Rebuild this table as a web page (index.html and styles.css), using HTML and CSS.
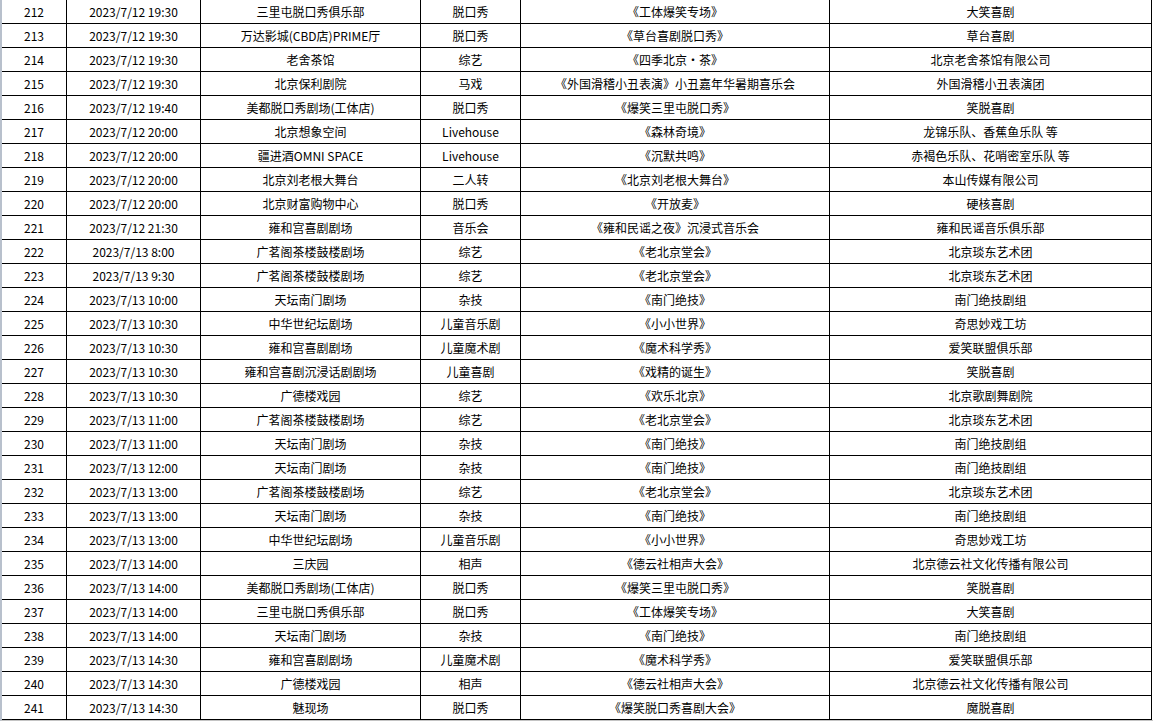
FILE: index.html
```html
<!DOCTYPE html>
<html lang="zh-CN">
<head>
<meta charset="utf-8">
<title>演出安排</title>
<link rel="stylesheet" href="styles.css">
</head>
<body>
<div class="sheet" role="table">
<div class="row" role="row"><div class="c">212</div><div class="c">2023/7/12 19:30</div><div class="c">三里屯脱口秀俱乐部</div><div class="c">脱口秀</div><div class="c">《工体爆笑专场》</div><div class="c">大笑喜剧</div></div>
<div class="row" role="row"><div class="c">213</div><div class="c">2023/7/12 19:30</div><div class="c">万达影城(CBD店)PRIME厅</div><div class="c">脱口秀</div><div class="c">《草台喜剧脱口秀》</div><div class="c">草台喜剧</div></div>
<div class="row" role="row"><div class="c">214</div><div class="c">2023/7/12 19:30</div><div class="c">老舍茶馆</div><div class="c">综艺</div><div class="c">《四季北京・茶》</div><div class="c">北京老舍茶馆有限公司</div></div>
<div class="row" role="row"><div class="c">215</div><div class="c">2023/7/12 19:30</div><div class="c">北京保利剧院</div><div class="c">马戏</div><div class="c">《外国滑稽小丑表演》小丑嘉年华暑期喜乐会</div><div class="c">外国滑稽小丑表演团</div></div>
<div class="row" role="row"><div class="c">216</div><div class="c">2023/7/12 19:40</div><div class="c">美都脱口秀剧场(工体店)</div><div class="c">脱口秀</div><div class="c">《爆笑三里屯脱口秀》</div><div class="c">笑脱喜剧</div></div>
<div class="row" role="row"><div class="c">217</div><div class="c">2023/7/12 20:00</div><div class="c">北京想象空间</div><div class="c">Livehouse</div><div class="c">《森林奇境》</div><div class="c">龙锦乐队、香蕉鱼乐队 等</div></div>
<div class="row" role="row"><div class="c">218</div><div class="c">2023/7/12 20:00</div><div class="c">疆进酒OMNI SPACE</div><div class="c">Livehouse</div><div class="c">《沉默共鸣》</div><div class="c">赤褐色乐队、花哨密室乐队 等</div></div>
<div class="row" role="row"><div class="c">219</div><div class="c">2023/7/12 20:00</div><div class="c">北京刘老根大舞台</div><div class="c">二人转</div><div class="c">《北京刘老根大舞台》</div><div class="c">本山传媒有限公司</div></div>
<div class="row" role="row"><div class="c">220</div><div class="c">2023/7/12 20:00</div><div class="c">北京财富购物中心</div><div class="c">脱口秀</div><div class="c">《开放麦》</div><div class="c">硬核喜剧</div></div>
<div class="row" role="row"><div class="c">221</div><div class="c">2023/7/12 21:30</div><div class="c">雍和宫喜剧剧场</div><div class="c">音乐会</div><div class="c">《雍和民谣之夜》沉浸式音乐会</div><div class="c">雍和民谣音乐俱乐部</div></div>
<div class="row" role="row"><div class="c">222</div><div class="c">2023/7/13 8:00</div><div class="c">广茗阁茶楼鼓楼剧场</div><div class="c">综艺</div><div class="c">《老北京堂会》</div><div class="c">北京琰东艺术团</div></div>
<div class="row" role="row"><div class="c">223</div><div class="c">2023/7/13 9:30</div><div class="c">广茗阁茶楼鼓楼剧场</div><div class="c">综艺</div><div class="c">《老北京堂会》</div><div class="c">北京琰东艺术团</div></div>
<div class="row" role="row"><div class="c">224</div><div class="c">2023/7/13 10:00</div><div class="c">天坛南门剧场</div><div class="c">杂技</div><div class="c">《南门绝技》</div><div class="c">南门绝技剧组</div></div>
<div class="row" role="row"><div class="c">225</div><div class="c">2023/7/13 10:30</div><div class="c">中华世纪坛剧场</div><div class="c">儿童音乐剧</div><div class="c">《小小世界》</div><div class="c">奇思妙戏工坊</div></div>
<div class="row" role="row"><div class="c">226</div><div class="c">2023/7/13 10:30</div><div class="c">雍和宫喜剧剧场</div><div class="c">儿童魔术剧</div><div class="c">《魔术科学秀》</div><div class="c">爱笑联盟俱乐部</div></div>
<div class="row" role="row"><div class="c">227</div><div class="c">2023/7/13 10:30</div><div class="c">雍和宫喜剧沉浸话剧剧场</div><div class="c">儿童喜剧</div><div class="c">《戏精的诞生》</div><div class="c">笑脱喜剧</div></div>
<div class="row" role="row"><div class="c">228</div><div class="c">2023/7/13 10:30</div><div class="c">广德楼戏园</div><div class="c">综艺</div><div class="c">《欢乐北京》</div><div class="c">北京歌剧舞剧院</div></div>
<div class="row" role="row"><div class="c">229</div><div class="c">2023/7/13 11:00</div><div class="c">广茗阁茶楼鼓楼剧场</div><div class="c">综艺</div><div class="c">《老北京堂会》</div><div class="c">北京琰东艺术团</div></div>
<div class="row" role="row"><div class="c">230</div><div class="c">2023/7/13 11:00</div><div class="c">天坛南门剧场</div><div class="c">杂技</div><div class="c">《南门绝技》</div><div class="c">南门绝技剧组</div></div>
<div class="row" role="row"><div class="c">231</div><div class="c">2023/7/13 12:00</div><div class="c">天坛南门剧场</div><div class="c">杂技</div><div class="c">《南门绝技》</div><div class="c">南门绝技剧组</div></div>
<div class="row" role="row"><div class="c">232</div><div class="c">2023/7/13 13:00</div><div class="c">广茗阁茶楼鼓楼剧场</div><div class="c">综艺</div><div class="c">《老北京堂会》</div><div class="c">北京琰东艺术团</div></div>
<div class="row" role="row"><div class="c">233</div><div class="c">2023/7/13 13:00</div><div class="c">天坛南门剧场</div><div class="c">杂技</div><div class="c">《南门绝技》</div><div class="c">南门绝技剧组</div></div>
<div class="row" role="row"><div class="c">234</div><div class="c">2023/7/13 13:00</div><div class="c">中华世纪坛剧场</div><div class="c">儿童音乐剧</div><div class="c">《小小世界》</div><div class="c">奇思妙戏工坊</div></div>
<div class="row" role="row"><div class="c">235</div><div class="c">2023/7/13 14:00</div><div class="c">三庆园</div><div class="c">相声</div><div class="c">《德云社相声大会》</div><div class="c">北京德云社文化传播有限公司</div></div>
<div class="row" role="row"><div class="c">236</div><div class="c">2023/7/13 14:00</div><div class="c">美都脱口秀剧场(工体店)</div><div class="c">脱口秀</div><div class="c">《爆笑三里屯脱口秀》</div><div class="c">笑脱喜剧</div></div>
<div class="row" role="row"><div class="c">237</div><div class="c">2023/7/13 14:00</div><div class="c">三里屯脱口秀俱乐部</div><div class="c">脱口秀</div><div class="c">《工体爆笑专场》</div><div class="c">大笑喜剧</div></div>
<div class="row" role="row"><div class="c">238</div><div class="c">2023/7/13 14:00</div><div class="c">天坛南门剧场</div><div class="c">杂技</div><div class="c">《南门绝技》</div><div class="c">南门绝技剧组</div></div>
<div class="row" role="row"><div class="c">239</div><div class="c">2023/7/13 14:30</div><div class="c">雍和宫喜剧剧场</div><div class="c">儿童魔术剧</div><div class="c">《魔术科学秀》</div><div class="c">爱笑联盟俱乐部</div></div>
<div class="row" role="row"><div class="c">240</div><div class="c">2023/7/13 14:30</div><div class="c">广德楼戏园</div><div class="c">相声</div><div class="c">《德云社相声大会》</div><div class="c">北京德云社文化传播有限公司</div></div>
<div class="row" role="row"><div class="c">241</div><div class="c">2023/7/13 14:30</div><div class="c">魅现场</div><div class="c">脱口秀</div><div class="c">《爆笑脱口秀喜剧大会》</div><div class="c">魔脱喜剧</div></div>
</div>
</body>
</html>
```

FILE: styles.css
```css
html, body {
  margin: 0;
  padding: 0;
  background: #ffffff;
}

body {
  font-family: "Noto Sans CJK SC", "Liberation Sans", sans-serif;
  font-size: 12px;
  color: #000000;
}

.sheet {
  display: flex;
  flex-direction: column;
  border-left: 2px solid #b8c0cc;
  border-bottom: 1px solid #c4c4c4;
  width: 1151px;
}

.row {
  display: grid;
  grid-template-columns: 65px 134px 220px 100px 309px 322px;
  height: 24px;
}

.c {
  box-sizing: border-box;
  border-right: 1px solid #000000;
  border-bottom: 1px solid #000000;
  display: flex;
  align-items: center;
  justify-content: center;
  line-height: 16px;
  white-space: nowrap;
  overflow: hidden;
}
```
